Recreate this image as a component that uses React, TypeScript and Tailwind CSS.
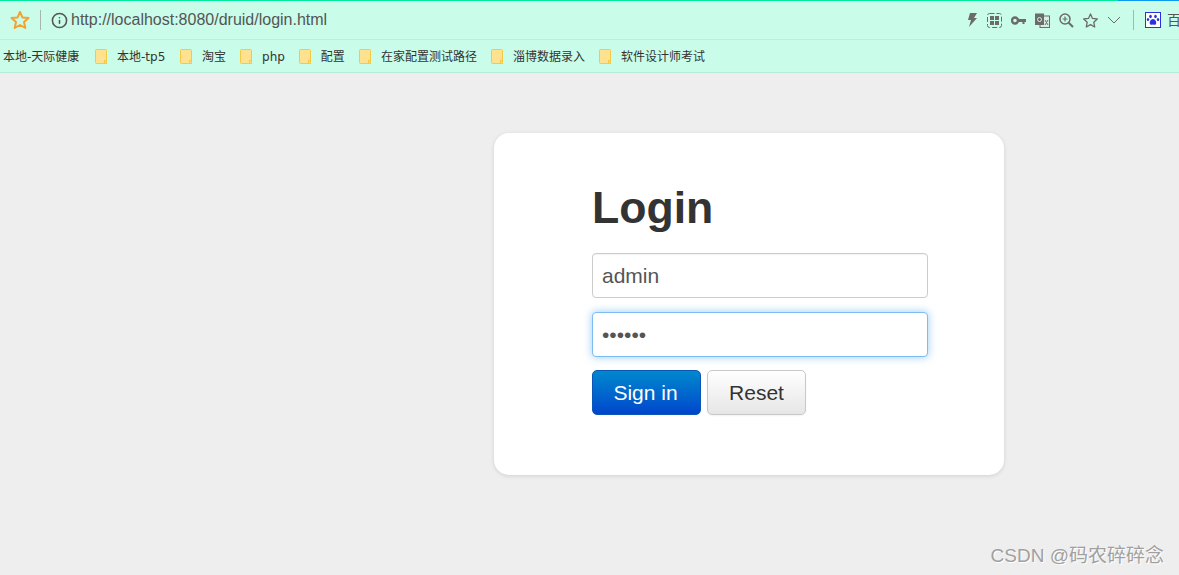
import React from "react";
import { Info } from "lucide-react";

const bookmarks = ["本地-tp5", "淘宝", "php", "配置", "在家配置测试路径", "淄博数据录入", "软件设计师考试"];

const cjk = "font-['Liberation_Sans','Noto_Sans_CJK_SC',sans-serif]";

function Folder() {
  return (
    <svg width="12" height="15" viewBox="0 0 12 15" className="shrink-0 block">
      <path d="M0.5 1.5 Q0.5 0.5 1.5 0.5 H10.5 Q11.5 0.5 11.5 1.5 V14.5 H1.5 Q0.5 14.5 0.5 13.5 Z" fill="#ffe28f" stroke="#f5c945" />
      <rect x="9.5" y="11.5" width="2" height="3" fill="#ffe28f" stroke="#f5c945" strokeWidth="1" />
    </svg>
  );
}

function ToolIcons() {
  return (
    <div className="flex items-center">
      {/* bolt */}
      <svg width="12" height="16" viewBox="0 0 12 16" className="ml-[1px] shrink-0">
        <path d="M4 1 H11 L8 6 H11 L3 15 L5 8 H2 Z" fill="#6b6b6b" />
      </svg>
      {/* qr */}
      <svg width="15" height="15" viewBox="0 0 15 15" className="ml-[9px] shrink-0" fill="none">
        <rect x="0.5" y="0.5" width="14" height="14" rx="2" stroke="#6b6b6b" strokeDasharray="5 2" />
        <rect x="3" y="3" width="4" height="4" fill="#6b6b6b" />
        <rect x="8" y="3" width="4" height="4" fill="#6b6b6b" />
        <rect x="3" y="8" width="4" height="4" fill="#6b6b6b" />
        <rect x="8" y="8" width="4" height="4" fill="#6b6b6b" />
      </svg>
      {/* key */}
      <svg width="15" height="9" viewBox="0 0 15 9" className="ml-[9px] shrink-0">
        <circle cx="4" cy="4.5" r="3" fill="none" stroke="#6b6b6b" strokeWidth="2.4" />
        <path d="M7 3 H15 V6 H13.5 V8 H11.5 V6 H7 Z" fill="#6b6b6b" />
      </svg>
      {/* translate */}
      <svg width="15" height="15" viewBox="0 0 15 15" className="ml-[9px] shrink-0">
        <rect x="5" y="3" width="9.5" height="11.5" fill="#d8eee4" stroke="#6b6b6b" />
        <path d="M0 0.5 H9 V12 H0 Z" fill="#6b6b6b" />
        <circle cx="4.5" cy="6.5" r="2" fill="none" stroke="#d8eee4" />
        <path d="M10 7 L13 12 M13 7 L10 12" stroke="#6b6b6b" />
      </svg>
      {/* zoom */}
      <svg width="15" height="15" viewBox="0 0 15 15" className="ml-[9px] shrink-0" fill="none" stroke="#6b6b6b">
        <circle cx="6" cy="6" r="5" strokeWidth="1.5" />
        <path d="M9.7 9.7 L14 14" strokeWidth="2" />
        <path d="M3.5 6 H8.5 M6 3.5 V8.5" strokeWidth="1.2" />
      </svg>
      {/* star */}
      <svg width="15" height="15" viewBox="0 0 15 15" className="ml-[9px] shrink-0" fill="none" stroke="#6b6b6b" strokeWidth="1.3" strokeLinejoin="round">
        <path d="M7.5 1 L9.5 5.4 L14.3 6 L10.8 9.2 L11.7 14 L7.5 11.6 L3.3 14 L4.2 9.2 L0.7 6 L5.5 5.4 Z" />
      </svg>
      {/* chevron */}
      <svg width="14" height="8" viewBox="0 0 14 8" className="ml-[9px] shrink-0" fill="none" stroke="#6b6b6b">
        <path d="M1 1 L7 7 L13 1" />
      </svg>
      <div className="w-px h-[20px] bg-[#a6b5ad] ml-[12px] shrink-0" />
      {/* paw */}
      <svg width="16" height="16" viewBox="0 0 16 16" className="ml-[11px] shrink-0">
        <rect x="0.5" y="0.5" width="15" height="15" fill="#fff" stroke="#2a32e0" />
        <ellipse cx="5.5" cy="4.5" rx="1.3" ry="1.8" fill="#2a32e0" />
        <ellipse cx="10.5" cy="4.5" rx="1.3" ry="1.8" fill="#2a32e0" />
        <ellipse cx="3" cy="7.5" rx="1.2" ry="1.6" fill="#2a32e0" />
        <ellipse cx="13" cy="7.5" rx="1.2" ry="1.6" fill="#2a32e0" />
        <path d="M8 7 C10 7 12 10 11 12 C10 13.5 9 12.5 8 12.5 C7 12.5 6 13.5 5 12 C4 10 6 7 8 7 Z" fill="#2a32e0" />
      </svg>
      <span className={`ml-[6px] text-[14px] leading-none text-[#555] whitespace-nowrap ${cjk}`}>百</span>
    </div>
  );
}

export default function App() {
  return (
    <div className={`relative h-[575px] w-[1179px] overflow-hidden bg-[#eeeeee] ${cjk}`}>
      {/* browser chrome */}
      <div className="flex h-px">
        <div className="w-[1118px] bg-[#00e89c]" />
        <div className="flex-1 bg-[#0a9af0]" />
      </div>
      <div className="h-[39px] flex items-center bg-[#c9fce9] border-b border-[#bdeedc] pl-[10px]">
        <svg width="20" height="20" viewBox="0 0 20 20" fill="none" stroke="#f7a02c" strokeWidth="2" strokeLinejoin="round" className="shrink-0">
          <path d="M10 2 L12.4 7.4 L18.5 8 L14 12 L15.3 18 L10 15 L4.7 18 L6 12 L1.5 8 L7.6 7.4 Z" />
        </svg>
        <div className="w-px h-[20px] bg-[#a6b5ad] ml-[10px]" />
        <Info size={17} strokeWidth={2.2} color="#555" className="ml-[10px]" />
        <span className="ml-[3px] text-[16px] text-[#555] font-['Liberation_Sans',sans-serif]">http://localhost:8080/druid/login.html</span>
        <div className="ml-auto overflow-hidden w-[221px] pl-[7px]">
          <ToolIcons />
        </div>
      </div>
      <div className="h-[33px] flex items-center bg-[#c9fce9] border-b border-[#b4ecd7] pl-[3px] text-[12px] leading-[16px] text-[#333] whitespace-nowrap font-['DejaVu_Sans','Noto_Sans_CJK_SC',sans-serif]">
        <span className="w-[78px] pt-[1px]">本地-天际健康</span>
        {bookmarks.map((b, i) => (
          <React.Fragment key={b}>
            <span className="ml-[14px]">
              <Folder />
            </span>
            <span className={i === 0 ? "ml-[10px] pt-[1px] w-[49px]" : "ml-[10px] pt-[1px]"}>{b}</span>
          </React.Fragment>
        ))}
      </div>

      {/* login */}
      <div className="pl-[494px] pt-[60px]">
        <div className="w-[510px] h-[342px] rounded-[15px] bg-white shadow-[0_1px_4px_rgba(0,0,0,0.12)] pl-[98px] pt-[47px]">
          <h1 className="text-[44.6px] leading-[55px] font-bold text-[#333] font-['Liberation_Sans',sans-serif]">Login</h1>
          <input
            readOnly
            value="admin"
            className="mt-[18px] block w-[336px] h-[45px] rounded-[4px] border border-[#cccccc] bg-white px-[9px] text-[21px] text-[#555] outline-none shadow-[inset_0_1px_1px_rgba(0,0,0,0.05)] font-['Liberation_Sans',sans-serif]"
          />
          <input
            readOnly
            type="password"
            value="123456"
            className="mt-[14px] block w-[336px] h-[45px] rounded-[4px] border border-[#7cbcf5] bg-white px-[9px] text-[21px] text-[#555] outline-none shadow-[0_0_8px_rgba(82,168,236,0.6)] font-['Liberation_Sans',sans-serif]"
          />
          <div className="mt-[13px] flex gap-[6px] font-['Liberation_Sans',sans-serif] text-[21px]">
            <button className="w-[109px] h-[45px] pr-[2px] rounded-[5px] text-white bg-gradient-to-b from-[#0088cc] to-[#0044cc] border border-[#0a55b8]">
              Sign in
            </button>
            <button className="w-[99px] h-[45px] rounded-[5px] text-[#333] bg-gradient-to-b from-white to-[#e6e6e6] border border-[#c8c8c8] shadow-[0_1px_2px_rgba(0,0,0,0.05)]">
              Reset
            </button>
          </div>
        </div>
      </div>

      <span className="absolute right-[15px] bottom-[7px] text-[19px] leading-[24px] text-[#a0a0a0] [text-shadow:1px_1px_0_#fff]">
        CSDN @码农碎碎念
      </span>
    </div>
  );
}
